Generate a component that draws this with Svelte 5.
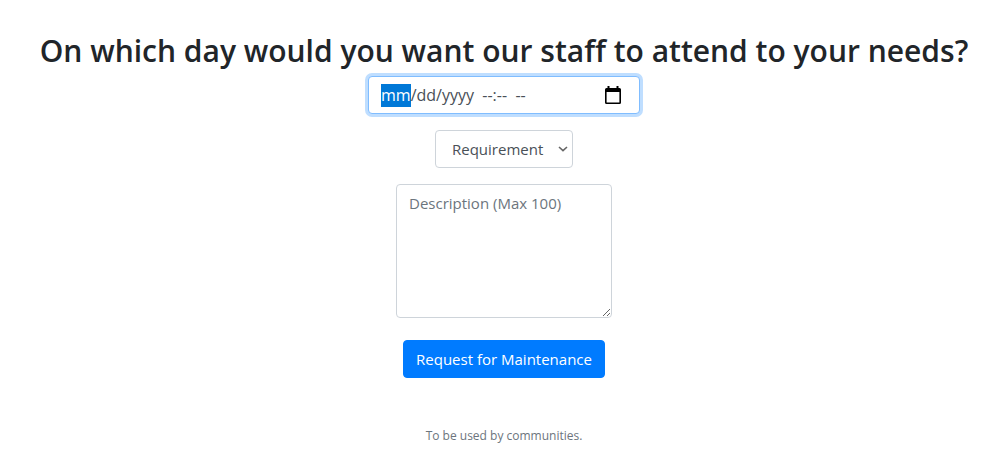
<script>
  import { onMount } from 'svelte';
  let when = $state('');
  let requirement = $state('');
  let description = $state('');
  let field;
  onMount(() => field.focus());
</script>

<main>
  <h1><label for="when">On which day would you want our staff to attend to your needs?</label></h1>
  <form onsubmit={(e) => e.preventDefault()}>
    <div class="control date">
      <input id="when" class:empty={!when} type="datetime-local" bind:value={when} bind:this={field} />
      <div class="face" aria-hidden="true">
        <span class="hint" class:gone={when}><span class="month">mm</span>/dd/yyyy&nbsp; --:--&nbsp; --</span>
        <svg width="16" height="18" viewBox="0 0 16 18">
          <path fill="#000" fill-rule="evenodd" d="M2.500 0h2v2h7V0h2v2h1a1.500 1.500 0 0 1 1.500 1.500v13a1.500 1.500 0 0 1-1.500 1.500h-13A1.500 1.500 0 0 1 0 16.500v-13A1.500 1.500 0 0 1 1.500 2h1zM1.600 6v10.400h12.800V6z" />
        </svg>
      </div>
    </div>
    <div class="control pick">
      <select aria-label="Requirement" bind:value={requirement}>
        <option value="">Requirement</option>
      </select>
      <div class="face" aria-hidden="true">
        <svg width="10" height="6" viewBox="0 0 10 6">
          <path fill="none" stroke="#666" stroke-width="1.600" d="M1 1l4 3.600 4-3.600" />
        </svg>
      </div>
    </div>
    <textarea aria-label="Description" placeholder="Description (Max 100)" maxlength="100" bind:value={description}></textarea>
    <button type="submit">Request for Maintenance</button>
  </form>
  <p>To be used by communities.</p>
</main>

<style>
  :global(body) {
    background: #fff;
  }
  main {
    box-sizing: border-box;
    padding: 31px 15px 16px;
    display: flex;
    flex-direction: column;
    align-items: center;
    font-family: "Segoe UI", "Open Sans", "Noto Sans", sans-serif;
    font-size: 15px;
    line-height: 24px;
    color: #212529;
  }
  h1 {
    margin: 0 0 6px;
    font-size: 30px;
    line-height: 39px;
    font-weight: 600;
    text-align: center;
  }
  form {
    display: flex;
    flex-direction: column;
    align-items: center;
  }
  .control {
    display: grid;
    margin-bottom: 16px;
  }
  .control > * {
    grid-area: 1 / 1;
  }
  .face {
    z-index: 1;
    display: flex;
    align-items: center;
    justify-content: space-between;
    pointer-events: none;
    color: #495057;
  }
  .date {
    width: 272px;
    font-size: 16px;
  }
  .date .face {
    padding: 0 19px 0 13px;
  }
  .pick .face {
    padding-right: 5px;
    justify-content: flex-end;
  }
  .gone {
    visibility: hidden;
  }
  input, select, textarea {
    box-sizing: border-box;
    margin: 0;
    padding: 6px 12px;
    border: 1px solid #ced4da;
    border-radius: 4px;
    background-color: #fff;
    color: #495057;
    font: inherit;
    outline: 0;
  }
  input {
    width: 100%;
    height: 38px;
  }
  input:focus {
    border-color: #80bdff;
    box-shadow: 0 0 0 3px #bfdeff;
  }
  input.empty::-webkit-datetime-edit {
    opacity: 0;
  }
  input::-webkit-calendar-picker-indicator {
    opacity: 0;
  }
  .month {
    display: inline-block;
    line-height: 23px;
  }
  input:focus + .face .month {
    background: #0078d7;
    color: #fff;
  }
  select {
    appearance: none;
    height: 38px;
    padding: 6px 28px 6px 16px;
  }
  textarea {
    width: 216px;
    height: 134px;
    margin-bottom: 22px;
    resize: both;
  }
  textarea::placeholder {
    color: #6c757d;
    opacity: 1;
  }
  button {
    padding: 6px 12px;
    border: 1px solid #007bff;
    border-radius: 4px;
    background: #007bff;
    color: #fff;
    font: inherit;
  }
  p {
    margin: 48px 0 0;
    font-size: 12px;
    line-height: 20px;
    color: #6c757d;
  }
</style>
